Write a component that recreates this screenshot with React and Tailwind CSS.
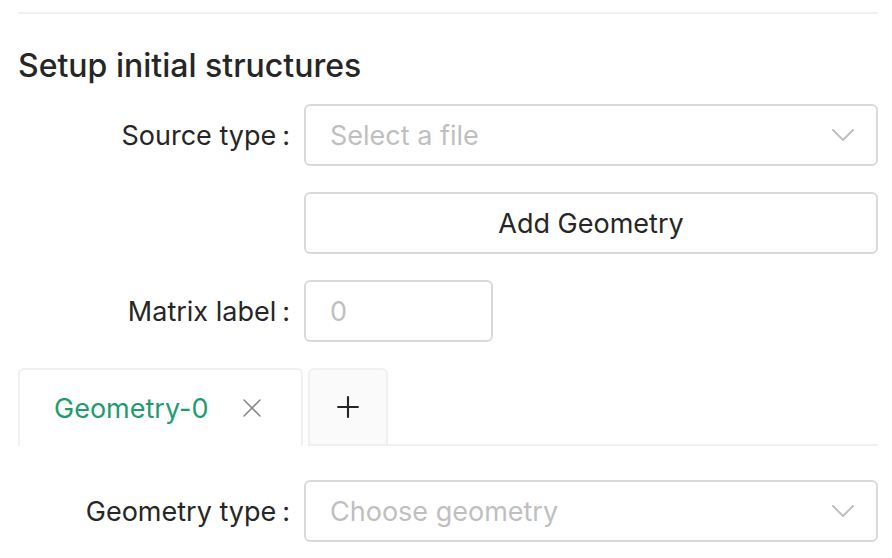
import { X, Plus } from 'lucide-react';

const Label = ({ children }) => (
  <div className="w-[286px] shrink-0 pr-[14px] flex justify-end items-center text-[#262626]">
    <span>{children}</span>
    <span className="ml-[6px]">:</span>
  </div>
);

const Chevron = () => (
  <svg width="22" height="12" viewBox="0 0 22 12" fill="none" className="text-[#bfbfbf]">
    <polyline points="1,1 11,11 21,1" stroke="currentColor" strokeWidth="2" strokeLinecap="round" strokeLinejoin="round" />
  </svg>
);

const SelectBox = ({ placeholder }) => (
  <div className="flex-1 h-[62px] border-2 border-[#d9d9d9] rounded-[6px] flex items-center justify-between pl-[24px] pr-[22px]">
    <span className="text-[#bfbfbf]">{placeholder}</span>
    <Chevron />
  </div>
);

export default function App() {
  return (
    <div
      className="w-[892px] h-[558px] bg-white overflow-hidden pl-[18px] pr-[14px] pt-[12px] text-[27px] leading-none"
      style={{ fontFamily: 'Inter, "Noto Sans", sans-serif' }}
    >
      {/* divider */}
      <div className="h-[2px] bg-[#f0f0f0]" />

      {/* Heading */}
      <h2 className="mt-[36px] text-[32px] font-medium text-[#262626] leading-none">
        Setup initial structures
      </h2>

      {/* Source type */}
      <div className="mt-[22px] flex items-center">
        <Label>Source type</Label>
        <SelectBox placeholder="Select a file" />
      </div>

      {/* Add geometry */}
      <div className="mt-[26px] flex">
        <div className="w-[286px] shrink-0" />
        <button className="flex-1 h-[62px] border-2 border-[#d9d9d9] rounded-[6px] text-[#262626] bg-white">
          Add Geometry
        </button>
      </div>

      {/* Matrix label */}
      <div className="mt-[26px] flex items-center">
        <Label>Matrix label</Label>
        <div className="w-[189px] h-[62px] border-2 border-[#d9d9d9] rounded-[6px] flex items-center pl-[24px] text-[#bfbfbf]">
          0
        </div>
      </div>

      {/* Tabs */}
      <div className="mt-[26px] flex items-end">
        <div className="w-[285px] h-[78px] border-2 border-b-0 border-[#f0f0f0] rounded-t-[6px] bg-white flex items-center pl-[34px]">
          <span className="text-[#1f9c6f]">Geometry-0</span>
          <X className="ml-[28px] h-[32px] w-[32px] text-[#8c8c8c]" strokeWidth={1.2} />
        </div>
        <div className="ml-[5px] w-[80px] h-[78px] border-2 border-[#f0f0f0] rounded-t-[6px] bg-[#fafafa] flex items-center justify-center">
          <Plus className="h-[34px] w-[34px] text-[#262626]" strokeWidth={1.5} />
        </div>
        <div className="flex-1 h-[2px] bg-[#f0f0f0]" />
      </div>

      {/* Geometry type */}
      <div className="mt-[34px] flex items-center">
        <Label>Geometry type</Label>
        <SelectBox placeholder="Choose geometry" />
      </div>
    </div>
  );
}
